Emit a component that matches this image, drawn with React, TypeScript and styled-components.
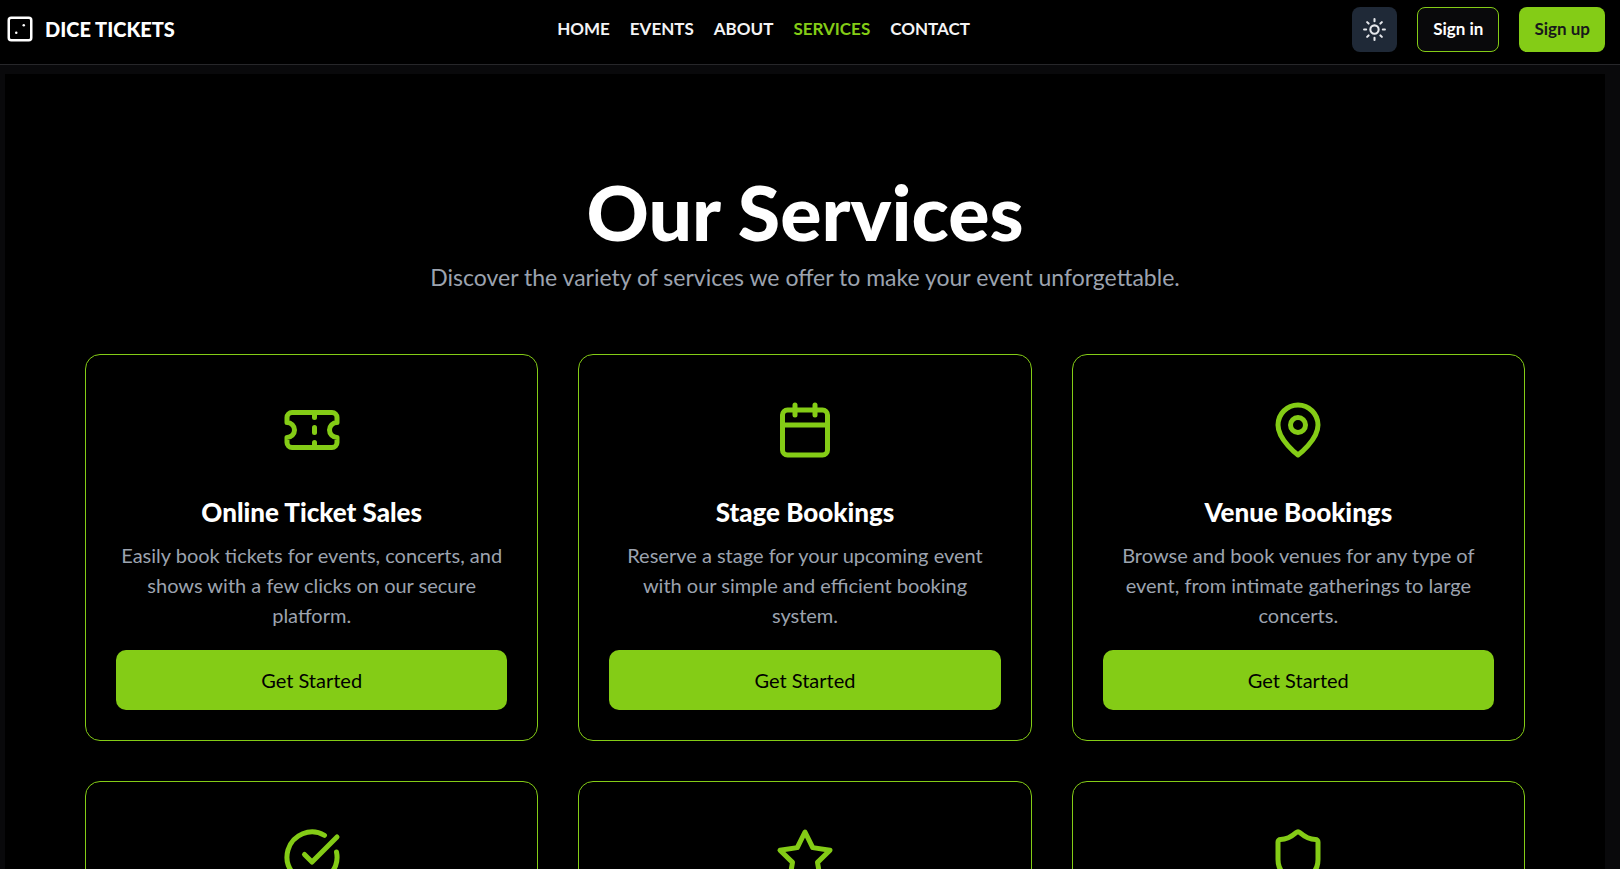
import React from "react";
import styled, { createGlobalStyle, css } from "styled-components";
import { Calendar, CircleCheckBig, Dice2, Shield, Sun, Ticket } from "lucide-react";

const lime = "#84cc16";

const GlobalStyle = createGlobalStyle`
  *, *::before, *::after {
    box-sizing: border-box;
  }
  html {
    scrollbar-width: none;
  }
  body {
    margin: 0;
    background: #09090b;
    color: #fff;
    font-family: Lato, "Open Sans", sans-serif;
    font-size: 20px;
    line-height: 30px;
  }
  h1, h2, p {
    margin: 0;
  }
`;

const Header = styled.header`
  display: flex;
  align-items: center;
  justify-content: space-between;
  height: 65px;
  padding: 0 15px 6px 5px;
  background: #000;
  border-bottom: 1px solid #27272a;
`;

const Brand = styled.a`
  display: flex;
  align-items: center;
  gap: 10px;
  color: #fff;
  font-size: 20px;
  font-weight: 900;
  text-decoration: none;
`;

const Nav = styled.nav`
  display: flex;
  gap: 20px;
`;

const NavLink = styled.a<{ $active?: boolean }>`
  color: ${(p) => (p.$active ? lime : "#f4f4f5")};
  font-size: 17px;
  font-weight: 700;
  line-height: 32px;
  text-decoration: none;
`;

const Actions = styled.div`
  display: flex;
  gap: 20px;
`;

const headerControl = css`
  display: flex;
  align-items: center;
  justify-content: center;
  height: 45px;
  border: 0;
  border-radius: 8px;
  font: inherit;
  font-size: 17px;
  font-weight: 700;
  cursor: pointer;
`;

const ThemeToggle = styled.button`
  ${headerControl}
  width: 45px;
  padding: 0;
  background: #1f2937;
  color: #e5e7eb;
`;

const AuthButton = styled.button<{ $solid?: boolean }>`
  ${headerControl}
  padding: 0 15px;
  background: ${(p) => (p.$solid ? lime : "#09090b")};
  color: ${(p) => (p.$solid ? "#18181b" : "#fff")};
  ${(p) => !p.$solid && `border: 1px solid ${lime};`}
`;

const Page = styled.main`
  padding: 9px 15px 0 5px;
`;

const Services = styled.section`
  padding: 100px 80px;
  background: #000;
  text-align: center;
`;

const Heading = styled.h1`
  margin-bottom: 12px;
  font-size: 77px;
  font-weight: 900;
  line-height: 74px;
`;

const Lead = styled.p`
  margin-bottom: 60px;
  color: #9ca3af;
  font-size: 23px;
  line-height: 34px;
`;

const Grid = styled.div`
  display: grid;
  grid-template-columns: repeat(3, 1fr);
  gap: 40px;
`;

const Card = styled.article`
  display: flex;
  flex-direction: column;
  padding: 30px;
  border: 1px solid ${lime};
  border-radius: 15px;
`;

const CardIcon = styled.div`
  display: flex;
  justify-content: center;
  margin-bottom: 20px;
  padding: 15px;
  color: ${lime};
`;

const CardTitle = styled.h2`
  margin-bottom: 10px;
  font-size: 26px;
  font-weight: 900;
  line-height: 35px;
`;

const CardText = styled.p`
  flex: 1;
  margin-bottom: 20px;
  color: #9ca3af;
`;

const CardButton = styled.button`
  height: 60px;
  border: 0;
  border-radius: 10px;
  background: ${lime};
  color: #000;
  font: inherit;
  cursor: pointer;
`;

const Outline = ({ children }: { children: React.ReactNode }) => (
  <svg
    width="60"
    height="60"
    viewBox="0 0 24 24"
    fill="none"
    stroke="currentColor"
    strokeWidth="2"
    strokeLinecap="round"
    strokeLinejoin="round"
    aria-hidden="true"
  >
    {children}
  </svg>
);

const PinIcon = () => (
  <Outline>
    <path d="M20 10c0 6-8 12-8 12s-8-6-8-12a8 8 0 0 1 16 0Z" />
    <circle cx="12" cy="10" r="3" />
  </Outline>
);

const StarIcon = () => (
  <Outline>
    <polygon points="12 2 15.09 8.26 22 9.27 17 14.14 18.18 21.02 12 17.77 5.82 21.02 7 14.14 2 9.27 8.91 8.26 12 2" />
  </Outline>
);

interface Service {
  id: string;
  icon: React.ReactNode;
  title?: string;
  text?: string;
}

const links = ["Home", "Events", "About", "Services", "Contact"];

const services: Service[] = [
  {
    id: "tickets",
    icon: <Ticket size={60} />,
    title: "Online Ticket Sales",
    text: "Easily book tickets for events, concerts, and shows with a few clicks on our secure platform.",
  },
  {
    id: "stages",
    icon: <Calendar size={60} />,
    title: "Stage Bookings",
    text: "Reserve a stage for your upcoming event with our simple and efficient booking system.",
  },
  {
    id: "venues",
    icon: <PinIcon />,
    title: "Venue Bookings",
    text: "Browse and book venues for any type of event, from intimate gatherings to large concerts.",
  },
  { id: "check", icon: <CircleCheckBig size={60} /> },
  { id: "star", icon: <StarIcon /> },
  { id: "shield", icon: <Shield size={60} /> },
];

export default function App() {
  return (
    <>
      <GlobalStyle />
      <Header>
        <Brand href="#home">
          <Dice2 size={30} />
          DICE TICKETS
        </Brand>
        <Nav aria-label="Main">
          {links.map((link) => (
            <NavLink key={link} href={`#${link.toLowerCase()}`} $active={link === "Services"}>
              {link.toUpperCase()}
            </NavLink>
          ))}
        </Nav>
        <Actions>
          <ThemeToggle type="button" aria-label="Toggle theme">
            <Sun size={25} />
          </ThemeToggle>
          <AuthButton type="button">Sign in</AuthButton>
          <AuthButton type="button" $solid>
            Sign up
          </AuthButton>
        </Actions>
      </Header>
      <Page>
        <Services>
          <Heading>Our Services</Heading>
          <Lead>Discover the variety of services we offer to make your event unforgettable.</Lead>
          <Grid>
            {services.map((service) => (
              <Card key={service.id}>
                <CardIcon>{service.icon}</CardIcon>
                {service.title && (
                  <>
                    <CardTitle>{service.title}</CardTitle>
                    <CardText>{service.text}</CardText>
                    <CardButton type="button">Get Started</CardButton>
                  </>
                )}
              </Card>
            ))}
          </Grid>
        </Services>
      </Page>
    </>
  );
}
